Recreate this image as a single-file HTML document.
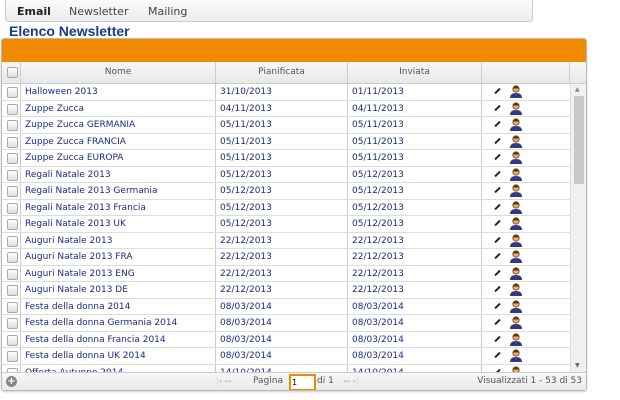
<!DOCTYPE html>
<html><head><style>
body{margin:0;width:620px;height:400px;background:#fff;font-family:"DejaVu Sans","Liberation Sans",sans-serif;position:relative;overflow:hidden}
.tabs{position:absolute;left:5px;top:0;width:526px;height:21px;border:1px solid #ccc;border-top:none;border-radius:0 0 3px 3px;background:linear-gradient(#fbfbfb,#ececec);font-size:11px;color:#444}
.tabs span{position:absolute;top:5px}
.title{position:absolute;left:9px;top:23px;font:bold 14px "Liberation Sans",sans-serif;color:#1a3a8a}
.grid{position:absolute;left:1px;top:38px;width:584px;height:351px;border:1px solid #bbb;border-radius:3px;overflow:hidden;box-shadow:0 1px 2px #ccc}
.orange{height:23px;background:#f28a00}
.hdr{position:absolute;top:23px;left:0;width:584px;height:21px;background:linear-gradient(#f7f7f7,#e8e8e8);border-bottom:1px solid #ccc;font-size:9px;color:#555}
.hdr div,.row div{position:absolute;top:0;height:100%;box-sizing:border-box;border-right:1px solid #ccc}
.hdr div{text-align:center;line-height:21px}
.body{position:absolute;top:45px;left:0;width:568px;height:288px;overflow:hidden}
.row{position:relative;height:16.5px;border-bottom:1px solid #ddd;box-sizing:border-box;font-size:9px;color:#1a2a8a}
.row div{line-height:17px;padding-left:4px}
.cb{width:9px;height:9px;border:1px solid #aaa;border-radius:2px;background:linear-gradient(#fff,#ddd);position:absolute;left:5px;top:3px}
.sb{position:absolute;left:568px;top:45px;width:16px;height:288px;background:#f0f0f0;border-left:1px solid #ddd}
.thumb{position:absolute;left:3px;top:12px;width:10px;height:88px;background:#c8c8c8}
.foot{position:absolute;top:333px;left:0;width:584px;height:18px;background:linear-gradient(#f7f7f7,#e9e9e9);border-top:1px solid #ccc;font-size:9px;color:#555}
.pen{position:absolute;left:12px;top:6px;width:7px;height:2px;background:#222;transform:rotate(-45deg)}
.usr{position:absolute;left:27px;top:1px;width:14px;height:13px}
</style></head><body>
<div class="tabs"><span style="left:11px;font-weight:bold;color:#222">Email</span><span style="left:63px">Newsletter</span><span style="left:142px">Mailing</span></div>
<div class="title">Elenco Newsletter</div>
<div class="grid">
<div class="orange"></div>
<div class="hdr">
<div style="left:0;width:19px"><span class="cb" style="top:5px"></span></div>
<div style="left:19px;width:195px">Nome</div>
<div style="left:214px;width:132px">Pianificata</div>
<div style="left:346px;width:134px">Inviata</div>
<div style="left:480px;width:88px"></div>
</div>
<div class="body" id="b"></div>
<div class="sb"><div style="position:absolute;left:4px;top:2px;font-size:6px;color:#888">▲</div><div class="thumb"></div><div style="position:absolute;left:4px;top:278px;font-size:6px;color:#666">▼</div></div>
<div class="foot">
<span style="position:absolute;left:4px;top:3px;width:11px;height:11px;border-radius:50%;background:#888;color:#fff;font-size:10px;line-height:11px;text-align:center;font-weight:bold">+</span>
<span style="position:absolute;left:214px;top:4px;color:#ccc;font-size:7px">|◂ ◂◂</span>
<span style="position:absolute;left:251px;top:3px">Pagina</span>
<span style="position:absolute;left:287px;top:1px;width:22px;height:13px;border:2px solid #f28a00;background:#fff;font-size:8px;color:#000;line-height:13px;box-sizing:content-box;padding-left:1px">1</span>
<span style="position:absolute;left:315px;top:3px">di 1</span>
<span style="position:absolute;left:342px;top:4px;color:#ccc;font-size:7px">▸▸ ▸|</span>
<span style="position:absolute;right:4px;top:3px">Visualizzati 1 - 53 di 53</span>
</div>
</div>
<script>
var d=[["Halloween 2013","31/10/2013","01/11/2013"],["Zuppe Zucca","04/11/2013","04/11/2013"],["Zuppe Zucca GERMANIA","05/11/2013","05/11/2013"],["Zuppe Zucca FRANCIA","05/11/2013","05/11/2013"],["Zuppe Zucca EUROPA","05/11/2013","05/11/2013"],["Regali Natale 2013","05/12/2013","05/12/2013"],["Regali Natale 2013 Germania","05/12/2013","05/12/2013"],["Regali Natale 2013 Francia","05/12/2013","05/12/2013"],["Regali Natale 2013 UK","05/12/2013","05/12/2013"],["Auguri Natale 2013","22/12/2013","22/12/2013"],["Auguri Natale 2013 FRA","22/12/2013","22/12/2013"],["Auguri Natale 2013 ENG","22/12/2013","22/12/2013"],["Auguri Natale 2013 DE","22/12/2013","22/12/2013"],["Festa della donna 2014","08/03/2014","08/03/2014"],["Festa della donna Germania 2014","08/03/2014","08/03/2014"],["Festa della donna Francia 2014","08/03/2014","08/03/2014"],["Festa della donna UK 2014","08/03/2014","08/03/2014"],["Offerta Autunno 2014","14/10/2014","14/10/2014"]];
var u='<svg class="usr" viewBox="0 0 14 13"><circle cx="7" cy="4" r="3.2" fill="#e8b070" stroke="#6a3a10" stroke-width=".8"/><path d="M3.8 3.5Q7 -1 10.2 3.5" fill="#5a3010"/><path d="M1 13Q1 8 7 8Q13 8 13 13Z" fill="#2a3a8a"/><path d="M6.4 8.5L7 12L7.6 8.5Z" fill="#c22"/></svg>';
var h='';d.forEach(function(r){h+='<div class="row"><div style="left:0;width:19px;padding:0"><span class="cb"></span></div><div style="left:19px;width:195px">'+r[0]+'</div><div style="left:214px;width:132px">'+r[1]+'</div><div style="left:346px;width:134px">'+r[2]+'</div><div style="left:480px;width:88px;border:none"><span class="pen"></span>'+u+'</div></div>'});
document.getElementById('b').innerHTML=h;
</script>
</body></html>
